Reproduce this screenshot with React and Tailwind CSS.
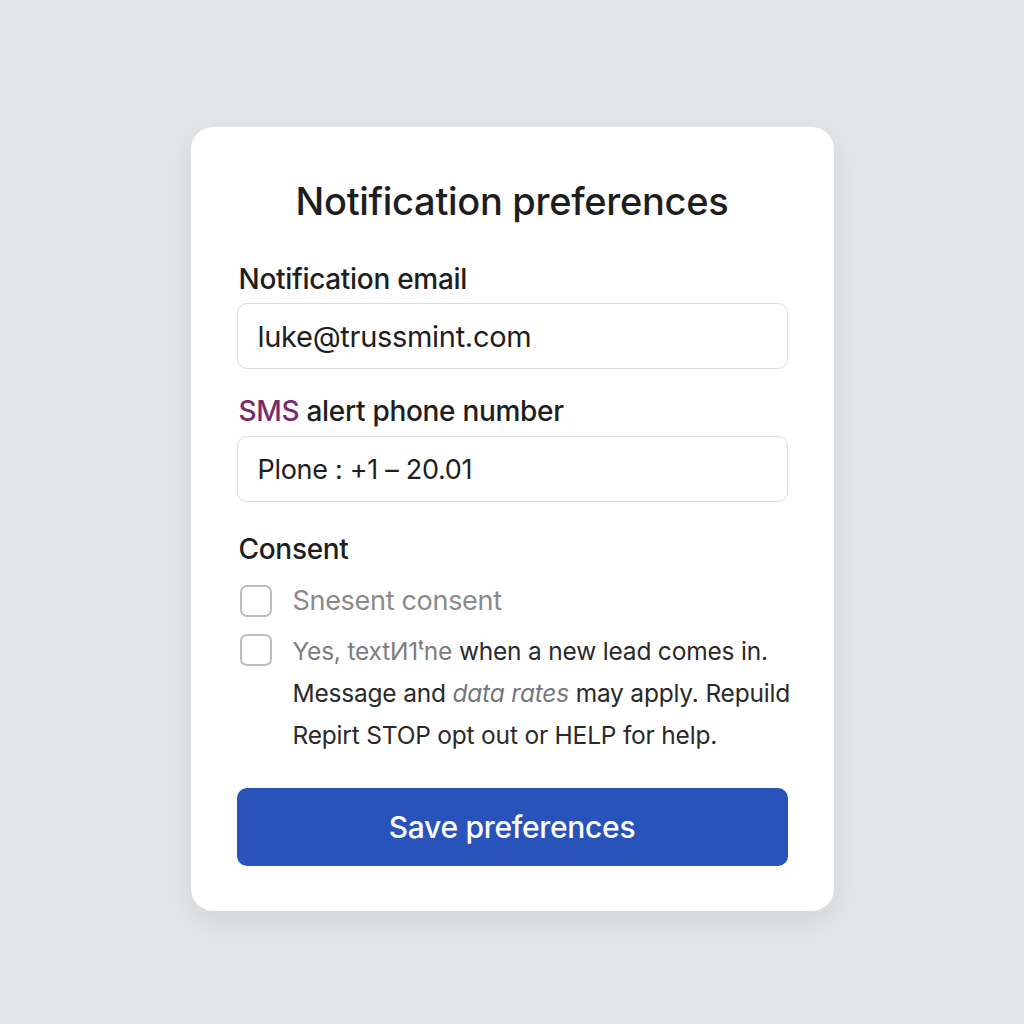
import React, { useState } from 'react';

const font = { fontFamily: 'Inter, "Noto Sans", sans-serif' };

const CheckRow = ({ checked, onChange, children }) => (
  <label className="flex items-start gap-[21px] pl-[3px] cursor-pointer">
    <span
      onClick={onChange}
      className={`mt-[4px] w-[32px] h-[32px] shrink-0 rounded-[7px] border-2 ${checked ? 'bg-[#2853bb] border-[#2853bb]' : 'bg-white border-[#bdbdbd]'}`}
    />
    <div className="flex-1">{children}</div>
  </label>
);

const App = () => {
  const [email, setEmail] = useState('luke@trussmint.com');
  const [phone, setPhone] = useState('Plone : +1 – 20.01');
  const [c1, setC1] = useState(false);
  const [c2, setC2] = useState(false);

  return (
    <div className="min-h-screen w-full bg-[#e4e5e7] flex justify-center pt-[127px]" style={font}>
      <div className="w-[643px] h-[784px] bg-white rounded-[22px] shadow-[0_10px_30px_rgba(0,0,0,0.08)] px-[46px] pt-[54px]">
        <h1 className="text-center text-[38px] leading-[40px] font-medium text-[#1e1e1e] tracking-[-0.3px]">
          Notification preferences
        </h1>

        <div className="mt-[42px] text-[28px] leading-[32px] font-medium text-[#1e1e1e] pl-[2px] tracking-[-0.3px]">Notification email</div>
        <input
          value={email}
          onChange={(e) => setEmail(e.target.value)}
          className="mt-[8px] w-full h-[66px] rounded-[10px] border border-[#dcdcdc] px-[20px] text-[29px] text-[#1e1e1e] outline-none tracking-[-0.3px]"
        />

        <div className="mt-[26px] text-[28px] leading-[32px] font-medium text-[#1e1e1e] pl-[2px] tracking-[-0.3px]">
          <span className="text-[#7b2a6c]">SMS</span> alert phone number
        </div>
        <input
          value={phone}
          onChange={(e) => setPhone(e.target.value)}
          className="mt-[9px] w-full h-[66px] rounded-[10px] border border-[#dcdcdc] px-[20px] text-[27px] text-[#1e1e1e] outline-none tracking-[-0.3px]"
        />

        <div className="mt-[31px] text-[28px] leading-[32px] font-medium text-[#1e1e1e] pl-[2px] tracking-[-0.3px]">Consent</div>

        <div className="mt-[16px] flex flex-col gap-[9px]">
          <CheckRow checked={c1} onChange={() => setC1(!c1)}>
            <span className="text-[27px] leading-[40px] text-[#8a8a8a] tracking-[-0.3px]">Snesent consent</span>
          </CheckRow>
          <CheckRow checked={c2} onChange={() => setC2(!c2)}>
            <p className="text-[24.5px] leading-[42px] text-[#2a2a2a] tracking-[-0.2px] whitespace-nowrap">
              <span className="text-[#7d7d7d]">Yes, textИ1ᵗne</span> when a new lead comes in.
              <br />
              Message and <i className="text-[#777]">data rates</i> may apply. Repuild
              <br />
              Repirt STOP opt out or HELP for help.
            </p>
          </CheckRow>
        </div>

        <button className="mt-[32px] w-full h-[78px] rounded-[10px] bg-[#2853bb] text-white text-[30px] font-medium tracking-[-0.3px]">
          Save preferences
        </button>
      </div>
    </div>
  );
};

export default App;
